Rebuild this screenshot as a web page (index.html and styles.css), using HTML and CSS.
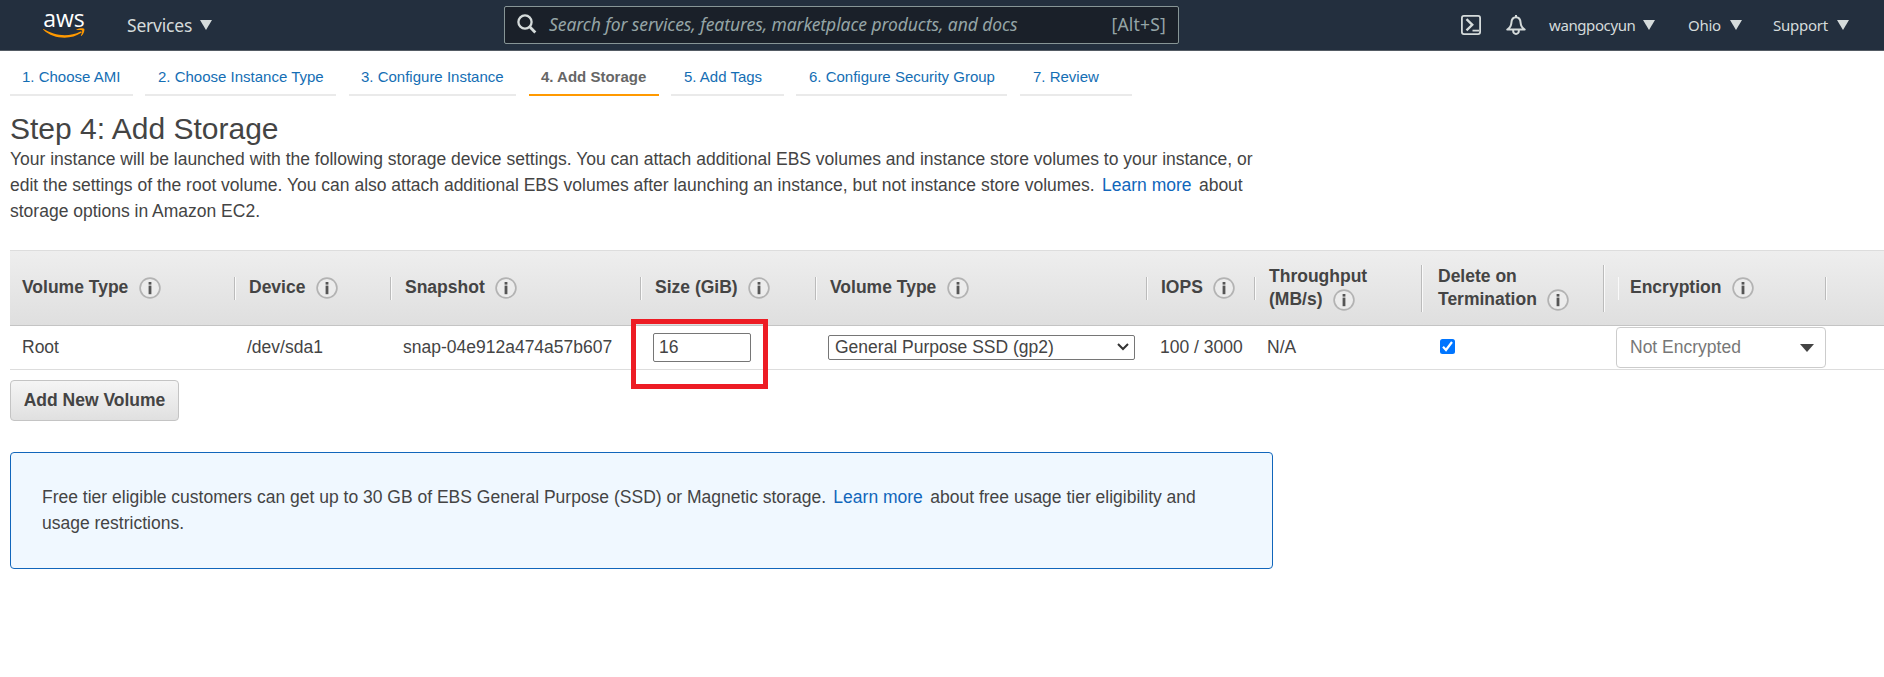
FILE: index.html
```html
<!DOCTYPE html>
<html lang="en">
<head>
<meta charset="utf-8">
<title>Step 4: Add Storage</title>
<link rel="stylesheet" href="styles.css">
</head>
<body>
<svg class="defs" width="0" height="0">
  <symbol id="info" viewBox="0 0 22 22">
    <circle cx="11" cy="11" r="9.9" fill="#ececec" stroke="#b3b3b3" stroke-width="1.700"/>
    <rect x="9.600" y="5" width="2.800" height="2.600" fill="#555"/>
    <rect x="9.600" y="8.600" width="2.800" height="8.600" fill="#555"/>
  </symbol>
</svg>
<header class="topbar">
  <div class="logo">
    <span class="logo-text">aws</span>
    <svg class="smile" width="42" height="11" viewBox="0 0 42 12" preserveAspectRatio="none">
      <path d="M.6 1.2C11 8.5 26 10.300 37.500 3.800c1.200-.5 1.800.7.800 1.500C28 13.200 10.500 12.500.300 1.900c-.4-.5-.1-1 .300-.7z" fill="#f90"/>
      <path d="M33.500 1.500C36 0 40.500-.2 41.200.8c.7 1.100-.3 5.600-2.600 7.700-.5.400-.9.200-.7-.3.700-1.700 1.700-4.800 1.100-5.500-.6-.8-3.500-.5-5.200-.4-.5 0-.7-.4-.3-.8z" fill="#f90"/>
    </svg>
  </div>
  <div class="nav-item services">Services<i class="caret"></i></div>
  <div class="search">
    <svg width="20" height="20" viewBox="0 0 20 20" fill="none" stroke="#d5dbdb" stroke-width="2.300"><circle cx="8" cy="8" r="6.600"/><path d="M12.700 12.700l5.600 5.800" stroke-width="2.800"/></svg>
    <span class="placeholder">Search for services, features, marketplace products, and docs</span>
    <span class="shortcut">[Alt+S]</span>
  </div>
  <div class="tools">
    <svg class="shell" width="20" height="20" viewBox="0 0 20 20" fill="none" stroke="#d5dbdb" stroke-width="1.800"><rect x=".9" y=".9" width="18.200" height="18.200" rx="2"/><path d="M5.500 4.200l5.800 5.600-5.800 5.600" stroke-width="2.300"/><path d="M11.500 15.600H18"/></svg>
    <svg class="bell" width="20" height="20" viewBox="0 0 20 20" fill="none" stroke="#d5dbdb" stroke-width="2" stroke-linejoin="round"><path d="M10 0v2M1.300 14.500h17.400c-2.600-1.500-3.800-3.300-4.100-6.700C14.400 4.300 12.800 2.300 10 2.300S5.600 4.300 5.400 7.800c-.3 3.400-1.500 5.200-4.100 6.700zM7.200 15v1.200c0 1.500 1.300 2.800 2.800 2.800s2.800-1.300 2.800-2.800V15"/></svg>
    <div class="nav-item user">wangpocyun<i class="caret"></i></div>
    <div class="nav-item region">Ohio<i class="caret"></i></div>
    <div class="nav-item support">Support<i class="caret"></i></div>
  </div>
</header>
<nav class="steps">
  <a class="step">1. Choose AMI</a>
  <a class="step">2. Choose Instance Type</a>
  <a class="step">3. Configure Instance</a>
  <a class="step active">4. Add Storage</a>
  <a class="step">5. Add Tags</a>
  <a class="step">6. Configure Security Group</a>
  <a class="step">7. Review</a>
</nav>
<main class="content">
  <h1 class="title">Step 4: Add Storage</h1>
  <p class="intro">Your instance will be launched with the following storage device settings. You can attach additional EBS volumes and instance store volumes to your instance, or<br>edit the settings of the root volume. You can also attach additional EBS volumes after launching an instance, but not instance store volumes. <a class="link">Learn more</a> about<br>storage options in Amazon EC2.</p>
  <section class="volumes">
    <div class="row head">
      <div class="cell first">Volume Type<svg class="info"><use href="#info"/></svg></div>
      <div class="cell">Device<svg class="info"><use href="#info"/></svg></div>
      <div class="cell">Snapshot<svg class="info"><use href="#info"/></svg></div>
      <div class="cell">Size (GiB)<svg class="info"><use href="#info"/></svg></div>
      <div class="cell">Volume Type<svg class="info"><use href="#info"/></svg></div>
      <div class="cell">IOPS<svg class="info"><use href="#info"/></svg></div>
      <div class="cell tall"><span>Throughput</span><span class="line">(MB/s)<svg class="info"><use href="#info"/></svg></span></div>
      <div class="cell tall wide"><span>Delete on</span><span class="line">Termination<svg class="info"><use href="#info"/></svg></span></div>
      <div class="cell gap"></div>
      <div class="cell enc">Encryption<svg class="info"><use href="#info"/></svg></div>
      <div></div>
    </div>
    <div class="row data">
      <div class="val">Root</div>
      <div class="val">/dev/sda1</div>
      <div class="val">snap-04e912a474a57b607</div>
      <div class="val control size"><input class="size-input" type="text" value="16"><div class="highlight"></div></div>
      <div class="val control"><div class="select">General Purpose SSD (gp2)<svg width="12" height="8" viewBox="0 0 12 8" fill="none" stroke="#333" stroke-width="2"><path d="M1 1l5 5 5-5"/></svg></div></div>
      <div class="val iops">100 / 3000</div>
      <div class="val">N/A</div>
      <div class="val"><svg class="check" width="15" height="15" viewBox="0 0 15 15"><rect width="15" height="15" rx="2.500" fill="#0075ff"/><path d="M3 7.800l3 3.200 6-8" fill="none" stroke="#fff" stroke-width="2.200"/></svg></div>
      <div></div>
      <div class="combo">Not Encrypted<i class="combo-caret"></i></div>
      <div></div>
    </div>
  </section>
  <button class="add">Add New Volume</button>
  <aside class="notice">Free tier eligible customers can get up to 30 GB of EBS General Purpose (SSD) or Magnetic storage. <a class="link">Learn more</a> about free usage tier eligibility and<br>usage restrictions.</aside>
</main>
</body>
</html>
```

FILE: styles.css
```css
* { box-sizing: border-box; }
body { margin: 0; height: 677px; overflow: hidden; background: #fff; color: #444; font: 17.5px/26px "Liberation Sans", Arial, sans-serif; }
.defs { display: block; position: absolute; }
.topbar { display: flex; align-items: center; height: 51px; background: #232f3e; border-bottom: 1px solid #545b64; color: #d5dbdb; font-family: "Noto Sans", sans-serif; }
.logo { width: 42px; height: 28px; margin: 0 0 1px 43px; display: flex; flex-direction: column; align-items: center; justify-content: space-between; color: #fff; }
.logo-text { font: 500 23px/15px "Open Sans", sans-serif; letter-spacing: -.1px; }
.smile { flex: none; }
.nav-item { display: flex; align-items: center; white-space: nowrap; font-size: 15px; letter-spacing: -.25px; }
.services { font-size: 17.500px; margin-left: 42px; width: 377px; letter-spacing: -.2px; padding-bottom: 1px; }
.caret { border: 6px solid transparent; border-top: 10px solid #d5dbdb; border-bottom: 0; margin-left: 8px; }
.search { display: flex; align-items: center; width: 675px; height: 38px; border: 1px solid #879596; border-radius: 2px; background: #1a2029; padding: 0 12px 2px 12px; font-size: 17.500px; color: #95a5a6; white-space: nowrap; }
.placeholder { font-style: italic; margin-left: 12px; flex: 1; letter-spacing: -.08px; }
.shortcut { letter-spacing: .2px; }
.tools { display: flex; align-items: center; margin-left: 282px; }
.bell { margin: 0 23px 0 25px; }
.user { width: 139px; letter-spacing: -.4px; }
.region { width: 85px; }
.region .caret { margin-left: 9px; }
.support .caret { margin-left: 9px; }
.steps { display: flex; height: 45px; margin-left: 10px; font-size: 15px; }
.step { border-bottom: 2px solid #eaeaea; color: #146eb4; padding-left: 13px; line-height: 51px; white-space: nowrap; height: 45px; }
.step:nth-child(1) { width: 123px; margin-right: 12px; padding-left: 12px; }
.step:nth-child(2) { width: 191px; margin-right: 13px; }
.step:nth-child(3) { width: 167px; margin-right: 13px; padding-left: 12px; }
.step:nth-child(4) { width: 130px; margin-right: 12px; padding-left: 12px; }
.step:nth-child(5) { width: 113px; margin-right: 12px; }
.step:nth-child(6) { width: 211px; margin-right: 13px; }
.step:nth-child(7) { width: 112px; }
.step.active { color: #666; font-weight: bold; border-color: #f90; }
.content { padding-left: 10px; }
.title { margin: 0; padding-top: 14px; font-size: 30px; line-height: 38px; font-weight: normal; height: 50px; }
.intro { margin: 0 0 26px; white-space: nowrap; }
.link { color: #1166bb; margin: 0 2.500px; }
.row { display: grid; grid-template-columns: 225px 156px 250px 175px 331px 108px 167px 182px 12px 210px 1fr; align-items: center; white-space: nowrap; }
.head { height: 76px; border-top: 1px solid #ddd; border-bottom: 1px solid #c4c4c4; background: linear-gradient(#eee, #dfdfdf); font-weight: bold; }
.cell { display: flex; align-items: center; height: 23px; padding: 0 0 2px 14px; border-right: 1px solid #bbb; box-shadow: 1px 0 #fafafa; }
.cell.first { padding-left: 12px; }
.info { width: 22px; height: 22px; margin: 1px 0 0 10.500px; flex: none; }
.cell.tall { height: 47px; flex-direction: column; align-items: flex-start; line-height: 23px; }
.cell.wide { padding-left: 16px; }
.line { display: flex; align-items: center; }
.gap { border: 0; }
.data { height: 44px; border-bottom: 1px solid #ddd; }
.val { padding: 0 0 2px 12px; display: flex; align-items: center; }
.control { padding-bottom: 0; }
.iops { padding-left: 13px; }
.size { position: relative; }
.size-input { width: 98px; height: 29px; border: 1px solid #767676; border-radius: 2px; padding: 0 5px 1px; font: inherit; color: inherit; }
.highlight { position: absolute; left: -10px; top: -14px; width: 137px; height: 70px; border: 5px solid #ed1c24; }
.select { width: 307px; height: 25px; border: 1px solid #767676; border-radius: 2px; padding: 0 5px 1px 6px; display: flex; align-items: center; justify-content: space-between; }
.check { margin-left: 6px; }
.combo { height: 41px; border: 1px solid #ccc; border-radius: 4px; display: flex; align-items: center; justify-content: space-between; padding: 0 11px 2px 13px; color: #777; }
.combo-caret { border: 7px solid transparent; border-top: 8px solid #444; border-bottom: 0; margin-top: 3px; }
.add { display: block; width: 169px; height: 41px; margin: 10px 0 31px; padding: 0 0 1px; border: 1px solid #c4c4c4; border-radius: 4px; background: linear-gradient(#f5f5f5, #e0e0e0); font: bold 17.500px "Liberation Sans", Arial, sans-serif; color: #444; }
.notice { width: 1263px; height: 117px; border: 1px solid #1166bb; border-radius: 4px; background: #f0f8ff; padding: 31px; white-space: nowrap; }
```
